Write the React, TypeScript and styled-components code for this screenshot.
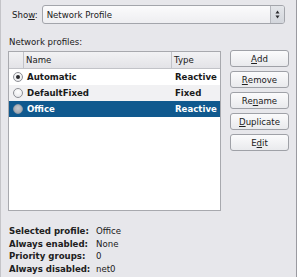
import React from "react";
import styled, { createGlobalStyle } from "styled-components";

const Global = createGlobalStyle`
  html, body { margin: 0; padding: 0; }
  body { background: #e7e7eb; font-family: "DejaVu Sans", sans-serif; font-size: 8.6px; color: #202020; }
`;

const Window = styled.div`
  width: 297px;
  height: 277px;
  box-sizing: border-box;
  border-left: 1px solid #c4c4c8;
  border-right: 1px solid #9a9aa0;
  background: #e7e7eb;
  padding: 5px 7px 0 7px;
  display: flex;
  flex-direction: column;
`;

const ShowRow = styled.div`
  display: flex;
  align-items: center;
  gap: 4px;
  padding-left: 4px;
  margin-right: 4px;
`;

const Label = styled.span`
  white-space: nowrap;
`;

const Combo = styled.div`
  flex: 1;
  height: 19px;
  box-sizing: border-box;
  border: 1px solid #a3a5ab;
  border-radius: 3px;
  background: linear-gradient(#fbfbfc, #eeeef1);
  display: flex;
  align-items: center;
  padding-left: 4px;
`;

const ComboText = styled.span`
  flex: 1;
`;

const Spinner = styled.div`
  width: 13px;
  align-self: stretch;
  border-left: 1px solid #b5b7bd;
  background: linear-gradient(#e4e6ea, #d3d6dc);
  border-radius: 0 2px 2px 0;
  display: flex;
  align-items: center;
  justify-content: center;
`;

const SectionTitle = styled.div`
  margin-top: 13px;
  margin-bottom: 4px;
  padding-left: 1px;
`;

const Main = styled.div`
  display: flex;
  gap: 9px;
`;

const Table = styled.div`
  flex: 0 0 213px;
  height: 160px;
  box-sizing: border-box;
  border: 1px solid #a8a9ae;
  background: #ffffff;
  display: flex;
  flex-direction: column;
`;

const HeaderRow = styled.div`
  display: grid;
  grid-template-columns: 15px 148px 1fr;
  height: 16px;
  background: linear-gradient(#f2f2f4, #e3e3e7);
  border-bottom: 1px solid #c2c3c8;
`;

const HeaderCell = styled.div`
  border-right: 1px solid #c2c3c8;
  padding-left: 2px;
  display: flex;
  align-items: center;
  &:last-child { border-right: none; }
`;

const Row = styled.div<{ $selected?: boolean; $alt?: boolean }>`
  display: grid;
  grid-template-columns: 15px 148px 1fr;
  height: 16px;
  align-items: center;
  font-weight: bold;
  background: ${(p) => (p.$selected ? "#10598e" : p.$alt ? "#f1f1f3" : "#ffffff")};
  color: ${(p) => (p.$selected ? "#ffffff" : "#1a1a1a")};
`;

const RadioCell = styled.div`
  display: flex;
  justify-content: center;
  padding-left: 2px;
`;

const Cell = styled.div`
  padding-left: 3px;
  white-space: nowrap;
`;

const Radio = styled.div<{ $checked?: boolean; $sel?: boolean }>`
  width: 10px;
  height: 10px;
  box-sizing: border-box;
  border-radius: 50%;
  border: 1px solid ${(p) => (p.$sel ? "#8d99a6" : "#8d8f95")};
  background: ${(p) =>
    p.$sel
      ? "radial-gradient(circle at 50% 40%, #c4c7cd, #9da1a8)"
      : "radial-gradient(circle at 50% 35%, #ffffff, #e3e4e8)"};
  display: flex;
  align-items: center;
  justify-content: center;
  &::after {
    content: "";
    display: ${(p) => (p.$checked ? "block" : "none")};
    width: 4px;
    height: 4px;
    border-radius: 50%;
    background: #2a2a2e;
  }
`;

const Buttons = styled.div`
  display: flex;
  flex-direction: column;
  gap: 4px;
  flex: 0 0 59px;
  margin-top: -1px;
`;

const Button = styled.div`
  height: 17px;
  box-sizing: border-box;
  border: 1px solid #9fa1a7;
  border-radius: 3px;
  background: linear-gradient(#fbfbfc, #e9eaed);
  display: flex;
  align-items: center;
  justify-content: center;
`;

const Mn = styled.span`
  text-decoration: underline;
  text-underline-offset: 1px;
`;

const Info = styled.div`
  margin-top: 14px;
  display: grid;
  grid-template-columns: 87px 1fr;
  line-height: 12.5px;
  padding-left: 1px;
`;

const InfoLabel = styled.span`
  font-weight: bold;
  white-space: nowrap;
`;

const rows = [
  { name: "Automatic", type: "Reactive", checked: true },
  { name: "DefaultFixed", type: "Fixed" },
  { name: "Office", type: "Reactive", selected: true },
];

export default function App() {
  return (
    <>
      <Global />
      <Window>
        <ShowRow>
          <Label>
            Sho<Mn>w</Mn>:
          </Label>
          <Combo>
            <ComboText>Network Profile</ComboText>
            <Spinner>
              <svg width="5" height="9" viewBox="0 0 5 9">
                <path d="M2.5 0.5 L4.5 3.5 L0.5 3.5 Z" fill="#2a2a2e" />
                <path d="M2.5 8.5 L4.5 5.5 L0.5 5.5 Z" fill="#2a2a2e" />
              </svg>
            </Spinner>
          </Combo>
        </ShowRow>
        <SectionTitle>Network profiles:</SectionTitle>
        <Main>
          <Table>
            <HeaderRow>
              <HeaderCell />
              <HeaderCell>Name</HeaderCell>
              <HeaderCell>Type</HeaderCell>
            </HeaderRow>
            {rows.map((r, i) => (
              <Row key={r.name} $selected={r.selected} $alt={i % 2 === 1}>
                <RadioCell>
                  <Radio $checked={r.checked} $sel={r.selected} />
                </RadioCell>
                <Cell>{r.name}</Cell>
                <Cell>{r.type}</Cell>
              </Row>
            ))}
          </Table>
          <Buttons>
            <Button><Mn>A</Mn>dd</Button>
            <Button><Mn>R</Mn>emove</Button>
            <Button>Re<Mn>n</Mn>ame</Button>
            <Button><Mn>D</Mn>uplicate</Button>
            <Button>E<Mn>d</Mn>it</Button>
          </Buttons>
        </Main>
        <Info>
          <InfoLabel>Selected profile:</InfoLabel>
          <span>Office</span>
          <InfoLabel>Always enabled:</InfoLabel>
          <span>None</span>
          <InfoLabel>Priority groups:</InfoLabel>
          <span>0</span>
          <InfoLabel>Always disabled:</InfoLabel>
          <span>net0</span>
        </Info>
      </Window>
    </>
  );
}
